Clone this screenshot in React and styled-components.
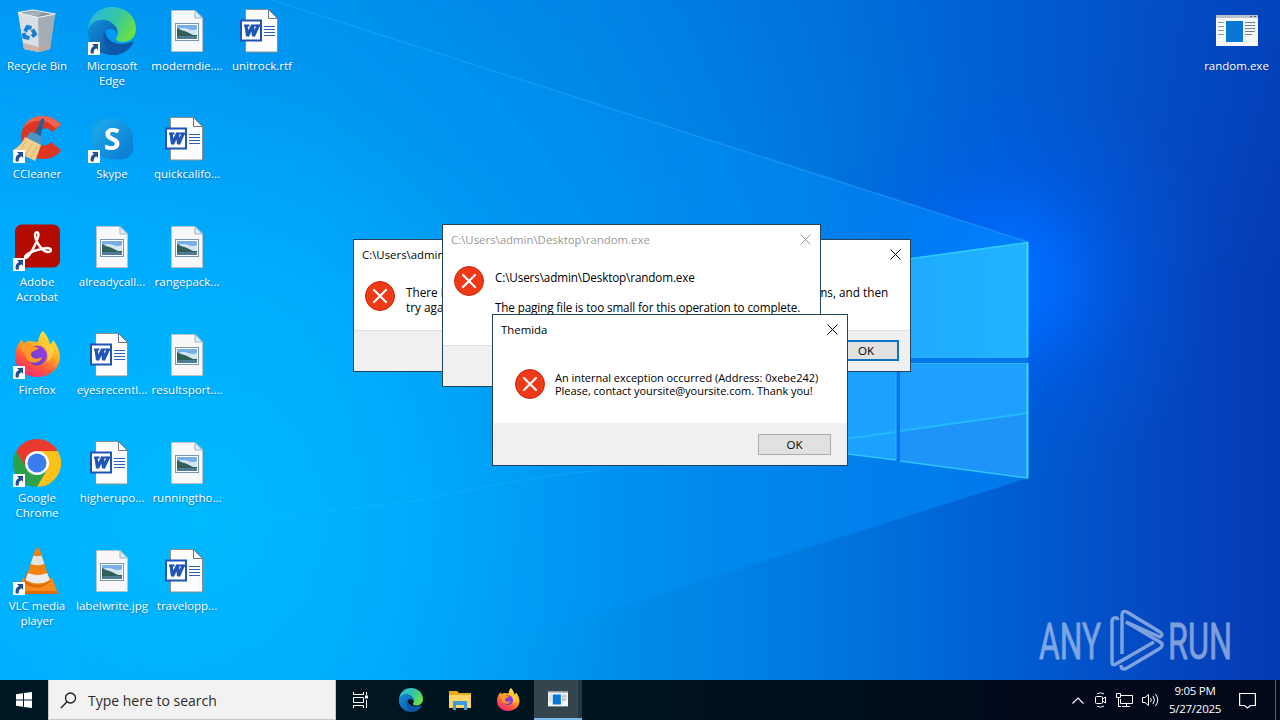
import styled, { createGlobalStyle } from 'styled-components'

const GlobalStyle = createGlobalStyle`
    * { box-sizing: border-box; }
    body {
        margin: 0;
        overflow: hidden;
        font-family: "Open Sans", "Noto Sans", sans-serif;
    }
    svg { display: block; flex: none; }
`

const desktopItems = [
    { icon: 'bin', label: 'Recycle Bin', col: 1, row: 1 },
    { icon: 'edge', label: 'Microsoft\nEdge', col: 2, row: 1, shortcut: true },
    { icon: 'image', label: 'moderndie....', col: 3, row: 1 },
    { icon: 'word', label: 'unitrock.rtf', col: 4, row: 1 },
    { icon: 'ccleaner', label: 'CCleaner', col: 1, row: 2, shortcut: true },
    { icon: 'skype', label: 'Skype', col: 2, row: 2, shortcut: true },
    { icon: 'word', label: 'quickcalifo...', col: 3, row: 2 },
    { icon: 'acrobat', label: 'Adobe\nAcrobat', col: 1, row: 3, shortcut: true },
    { icon: 'image', label: 'alreadycall...', col: 2, row: 3 },
    { icon: 'image', label: 'rangepack...', col: 3, row: 3 },
    { icon: 'firefox', label: 'Firefox', col: 1, row: 4, shortcut: true },
    { icon: 'word', label: 'eyesrecentl...', col: 2, row: 4 },
    { icon: 'image', label: 'resultsport....', col: 3, row: 4 },
    { icon: 'chrome', label: 'Google\nChrome', col: 1, row: 5, shortcut: true },
    { icon: 'word', label: 'higherupo...', col: 2, row: 5 },
    { icon: 'image', label: 'runningtho...', col: 3, row: 5 },
    { icon: 'vlc', label: 'VLC media\nplayer', col: 1, row: 6, shortcut: true },
    { icon: 'image', label: 'labelwrite.jpg', col: 2, row: 6 },
    { icon: 'word', label: 'travelopp...', col: 3, row: 6 },
    { icon: 'program', label: 'random.exe', col: 6, row: 1 },
]

function Wallpaper() {
    return (
        <WallpaperSvg viewBox="0 0 1280 720" width="1280" height="720">
            <defs>
                <linearGradient id="sky" x1="0" y1="0" x2="1280" y2="0" gradientUnits="userSpaceOnUse">
                    <stop offset="0" stopColor="#00adff" />
                    <stop offset="0.25" stopColor="#00a4f8" />
                    <stop offset="0.45" stopColor="#0092ec" />
                    <stop offset="0.62" stopColor="#007be0" />
                    <stop offset="0.78" stopColor="#005fd3" />
                    <stop offset="0.9" stopColor="#0449c2" />
                    <stop offset="1" stopColor="#043ab3" />
                </linearGradient>
                <linearGradient id="top" x1="0" y1="0" x2="0" y2="1">
                    <stop offset="0" stopColor="#005ed2" stopOpacity="0.25" />
                    <stop offset="0.4" stopColor="#0068d8" stopOpacity="0" />
                </linearGradient>
                <radialGradient id="cyan" cx="200" cy="520" r="440" gradientUnits="userSpaceOnUse">
                    <stop offset="0" stopColor="#00baff" stopOpacity="0.95" />
                    <stop offset="0.5" stopColor="#00b5ff" stopOpacity="0.6" />
                    <stop offset="1" stopColor="#00a8ff" stopOpacity="0" />
                </radialGradient>
                <radialGradient id="glow" cx="1010" cy="280" r="210" gradientUnits="userSpaceOnUse">
                    <stop offset="0" stopColor="#0074ff" />
                    <stop offset="0.25" stopColor="#006aff" stopOpacity="0.8" />
                    <stop offset="0.6" stopColor="#005cf0" stopOpacity="0.3" />
                    <stop offset="1" stopColor="#0058e6" stopOpacity="0" />
                </radialGradient>
                <linearGradient id="beam" x1="300" y1="0" x2="1028" y2="0" gradientUnits="userSpaceOnUse">
                    <stop offset="0" stopColor="#009eff" stopOpacity="0" />
                    <stop offset="0.35" stopColor="#009aff" stopOpacity="0.2" />
                    <stop offset="1" stopColor="#008cff" stopOpacity="0.6" />
                </linearGradient>
                <linearGradient id="ray" x1="270" y1="0" x2="1028" y2="0" gradientUnits="userSpaceOnUse">
                    <stop offset="0" stopColor="#2fb8ff" stopOpacity="0.3" />
                    <stop offset="1" stopColor="#2fa8ff" stopOpacity="0.45" />
                </linearGradient>
                <linearGradient id="pane" x1="0" y1="0" x2="1" y2="0">
                    <stop offset="0" stopColor="#1ba4ff" />
                    <stop offset="1" stopColor="#22b2ff" />
                </linearGradient>
            </defs>
            <rect width="1280" height="720" fill="url(#sky)" />
            <rect width="1280" height="720" fill="url(#top)" />
            <rect width="1280" height="720" fill="url(#cyan)" />
            <circle cx="1010" cy="280" r="210" fill="url(#glow)" />
            <path d="M272 0 1028 242V478L300 708V0Z" fill="url(#beam)" />
            <path d="M272 0 1028 242" stroke="url(#ray)" strokeWidth="1.5" />
            <path d="M600 470Q520 478 420 500L230 523" fill="none" stroke="#29c3ff" strokeOpacity="0.2" strokeWidth="1.5" />
            <path d="M780 276 1028 242V478L780 446Z" fill="#0078ec" />
            <path d="M780 276 1028 242V358H780Z" fill="url(#pane)" />
            <path d="M900 363H1028V478L900 461Z" fill="#1f9fff" />
            <path d="M780 363H896V460L780 446Z" fill="#1ba1ff" />
            <path d="M900 431 1028 413V478L900 461Z" fill="#1f90f5" opacity="0.7" />
            <path d="M800 445 896 432M900 431 1028 413" stroke="#22b9ff" strokeWidth="2" />
            <path d="M800 274 1028 242.5" stroke="#2accff" strokeWidth="1.5" />
            <path d="M1027.5 242V357M1027.5 363V478" stroke="#3bdcff" strokeWidth="2" />
            <path d="M900 357.5H1027M900 363.5H1027M896 372V460" stroke="#30b2ff" />
            <path d="M800 448 896 460M900 461 1028 478" stroke="#30c4ff" strokeWidth="1.5" />
        </WallpaperSvg>
    )
}

function BinIcon() {
    return (
        <svg width="48" height="48" viewBox="0 0 48 48">
            <path d="M5 5 11 42 26 45 37 42 42 7 25 9Z" fill="#c9d0d6" />
            <path d="M5 5 11 42 26 45 25 10Z" fill="#d9e0e5" />
            <path d="M25 10 42 7 37 42 26 45Z" fill="#a4adb5" />
            <path d="M10 36 26 40 38 36 37 42 26 45 11 42Z" fill="#c8a497" opacity="0.75" />
            <path d="M5 5.500 20 3 42.500 7 25 10.500Z" fill="#86939c" stroke="#eef5f9" strokeWidth="1.200" />
            <path d="M9 6 20 4.500 30 6 24 9Z" fill="#a9b3ba" />
            <g fill="none" stroke="#1580d4" strokeWidth="4">
                <path d="M12 24.500 14.500 20 18.500 21" />
                <path d="M19.500 22.500 22 27 19 29.500" />
                <path d="M16.500 31 11.500 30 10.500 26" />
            </g>
        </svg>
    )
}

function EdgeIcon({ size = 48 }) {
    return (
        <svg width={size} height={size} viewBox="0 0 48 48">
            <defs>
                <linearGradient id="edgeTop" x1="0" x2="1" y1="0.2" y2="0.6">
                    <stop offset="0" stopColor="#2bb6e4" />
                    <stop offset="0.55" stopColor="#35c7a6" />
                    <stop offset="1" stopColor="#6ee13f" />
                </linearGradient>
                <linearGradient id="edgeLow" x1="0" x2="1" y1="0" y2="1">
                    <stop offset="0" stopColor="#1191dd" />
                    <stop offset="1" stopColor="#0c4d9c" />
                </linearGradient>
            </defs>
            <path d="M0 23C1 9 11 0 24 0 38 0 48 10 48 22 48 30 42 35 35 35 30 35 27 33 28 31 31 28 30 21 25 17 16 9 4 14 0 23Z" fill="url(#edgeTop)" />
            <path d="M0 23C3 13 16 9 25 17 29 20 30 24 29 27 27 20 18 20 16 27 14 36 22 44 32 47 15 52-2 39 0 23Z" fill="url(#edgeLow)" />
            <path d="M17 24C11 34 21 47 32 47 38 45 43 41 45 36 46 34 45 34 43 35 31 40 18 35 17 24Z" fill="#0d57a6" />
        </svg>
    )
}

function ImageIcon() {
    return (
        <svg width="48" height="48" viewBox="0 0 48 48">
            <path d="M8.500 3.500H32L39.500 11V44.500H8.500Z" fill="#f8f8f8" stroke="#b6c3cb" />
            <path d="M32 3.500V11H39.500Z" fill="#d7eefb" stroke="#9db5c2" />
            <rect x="12.500" y="16.500" width="23" height="17" fill="#fff" stroke="#7b97aa" />
            <rect x="14" y="18" width="20" height="14" fill="#78aee8" />
            <path d="M14 22.500Q20 20 25 22T34 22V28H14Z" fill="#d3e6f2" />
            <path d="M14 21Q19 24 23 24.500L30 28H34V29.500H14Z" fill="#2f5f56" />
            <path d="M14 29H34V32H14Z" fill="#4d7c93" />
        </svg>
    )
}

function WordIcon() {
    return (
        <svg width="48" height="48" viewBox="0 0 48 48">
            <path d="M7.500 2.500H30.500L39.500 11.500V45H7.500Z" fill="#fdfdfd" stroke="#8a8f94" />
            <path d="M30.500 2.500V11.500H39.500Z" fill="#fff" stroke="#6f767c" />
            <path d="M26 19.500H37M26 22.500H37M26 25.500H37M26 28.500H37" stroke="#2e62b9" />
            <rect x="3" y="13.500" width="20" height="20" fill="#fff" stroke="#1e55b3" strokeWidth="2" />
            <path d="M6 18.500H11.500M13 18.500H22" stroke="#1f55b4" strokeWidth="2" />
            <path d="M8 18 9.500 29 14.500 18.500 15.500 29 20.500 18" fill="none" stroke="#1f55b4" strokeWidth="3.200" strokeLinejoin="bevel" />
        </svg>
    )
}

function CCleanerIcon() {
    return (
        <svg width="48" height="48" viewBox="0 0 48 48">
            <path d="M48 10C38-3 14-2 9 16 5 30 15 44 30 44 38 44 44 41 48 35L38 27C34 32 28 31 26 27 23 21 25 16 29 14 34 12 37 14 39 17Z" fill="#de3625" />
            <path d="M48 10C38-3 16-2 10 13 19 4 33 3 42 13Z" fill="#f0664c" />
            <path d="M28 4.500Q30 2 31.500 5L27 23 21 20Z" fill="#2d5e91" />
            <path d="M17 17Q24 17 30 24L28 31 13 24Z" fill="#4a94c8" />
            <path d="M12 22 28 30Q25 39 22 46L0 35Q8 31 12 22Z" fill="#f3cf90" />
            <path d="M13 26 6 37M19 29 12 41M24 31 18 43" stroke="#d8a865" strokeWidth="0.800" />
        </svg>
    )
}

function SkypeIcon() {
    return (
        <svg width="48" height="48" viewBox="0 0 48 48">
            <defs>
                <linearGradient id="skypeFill" x1="0" x2="1" y1="0" y2="1">
                    <stop offset="0" stopColor="#1eaeec" />
                    <stop offset="1" stopColor="#0a78d0" />
                </linearGradient>
            </defs>
            <circle cx="16" cy="17" r="13" fill="#12a0e6" />
            <circle cx="33" cy="32" r="12.500" fill="#0a80d6" />
            <circle cx="24.500" cy="24" r="20.500" fill="url(#skypeFill)" />
            <text x="24" y="34.500" textAnchor="middle" fill="#fff" fontFamily="Open Sans, sans-serif" fontSize="30" fontWeight="700">S</text>
        </svg>
    )
}

function AcrobatIcon() {
    return (
        <svg width="48" height="48" viewBox="0 0 48 48">
            <rect x="2" y="1.500" width="45" height="43" rx="7" fill="#b30b00" />
            <path d="M12 34C13 30 25 26 34 25 39 25 39 29 35 29 28 29 22 16 22 12 22 8 27 8 25 14 23 22 16 34 13 35Q12 35 12 34Z" fill="none" stroke="#fff" strokeWidth="2.400" strokeLinejoin="round" />
        </svg>
    )
}

function FirefoxIcon({ size = 48 }) {
    return (
        <svg width={size} height={size} viewBox="0 0 48 48">
            <defs>
                <linearGradient id="foxBody" x1="0.8" x2="0.25" y1="0" y2="1">
                    <stop offset="0" stopColor="#fff14a" />
                    <stop offset="0.4" stopColor="#ffaf20" />
                    <stop offset="0.7" stopColor="#ff573d" />
                    <stop offset="1" stopColor="#ef2679" />
                </linearGradient>
                <linearGradient id="foxGlobe" x1="0" x2="1" y1="1" y2="0">
                    <stop offset="0" stopColor="#5c45c8" />
                    <stop offset="1" stopColor="#a13be2" />
                </linearGradient>
            </defs>
            <path d="M30 0C34 4 36 9 37 13 39 12 40 10 40 9 45 15 47 21 47 27 46 39 36 46 24 46 11 46 2 37 2 25 2 18 5 13 9 8 9 10 10 12 12 12 16 8 20 11 25 11 26 5 27 3 30 0Z" fill="url(#foxBody)" />
            <circle cx="24" cy="24.500" r="10" fill="url(#foxGlobe)" />
            <path d="M6 14C11 10 16 11 19 15L26 17C23 20 18 20 18 23 18 28 24 29 29 26 27 34 13 34 12 23 10 20 7 18 6 14Z" fill="#ff9b25" />
            <path d="M25 12C33 13 37 22 34 31 39 28 42 22 40 16Z" fill="#ffd34a" opacity="0.8" />
        </svg>
    )
}

function ChromeIcon() {
    return (
        <svg width="48" height="48" viewBox="0 0 48 48">
            <path d="M3.200 12A24 24 0 0 1 44.800 12H24Z" fill="#ea3a30" />
            <path d="M3.200 12A24 24 0 0 0 24 48L34.400 30 24 24Z" fill="#2ca14a" />
            <path d="M44.800 12A24 24 0 0 1 24 48L34.400 30 24 12Z" fill="#fbc116" />
            <path d="M3.200 12H24V20L13 28Z" fill="#ea3a30" />
            <circle cx="24" cy="24" r="12" fill="#fff" />
            <circle cx="24" cy="24" r="9.500" fill="#3b7ded" />
        </svg>
    )
}

function VlcIcon() {
    return (
        <svg width="48" height="48" viewBox="0 0 48 48">
            <path d="M10 31H39L45 46H5Z" fill="#f68b1c" />
            <path d="M5 44H44.500L45 47H5Z" fill="#e06c05" />
            <path d="M11 32 14 26H34L38 34Q25 46 11 36Z" fill="#df6a05" />
            <path d="M22.500 2Q24.500 0 26.500 2L37 34Q25 42 12 34Z" fill="#f5810d" />
            <path d="M20.500 8.500Q25 10 28.500 8.500L31.500 17Q25 19.500 17.500 17Z" fill="#e4e4e2" />
            <path d="M15 26Q25 30 34 26L37 33Q25 40 12.500 33Z" fill="#ececea" />
        </svg>
    )
}

function ProgramIcon({ small }) {
    return (
        <svg width={small ? 20 : 42} height={small ? 16 : 48} viewBox={small ? '0 8 42 31' : '0 0 42 48'}>
            <rect y="8" width="42" height="31" fill="#f4f6f8" />
            <path d="M0 8H42V11H0Z" fill="#b8c1c9" />
            <path d="M34 9.500H36M38 9.500H40" stroke="#59636b" />
            <rect x="10" y="14" width="17" height="21" fill="#0878d4" />
            <path d="M2 15.500H8M2 19.500H8M2 23.500H8M2 27.500H8" stroke="#939ba2" />
            <path d="M29 15.500H39M29 18.500H39M29 21.500H39M29 24.500H39M29 27.500H36" stroke="#788089" />
        </svg>
    )
}

const icons = {
    bin: BinIcon,
    edge: EdgeIcon,
    image: ImageIcon,
    word: WordIcon,
    ccleaner: CCleanerIcon,
    skype: SkypeIcon,
    acrobat: AcrobatIcon,
    firefox: FirefoxIcon,
    chrome: ChromeIcon,
    vlc: VlcIcon,
    program: ProgramIcon,
}

function DesktopIcon({ item }) {
    const Icon = icons[item.icon]
    return (
        <DesktopCell $col={item.col} $row={item.row}>
            <IconBox>
                <Icon />
                {item.shortcut &&
                <ShortcutBadge>
                    <svg width="12" height="13" viewBox="0 0 12 13">
                        <path d="M4 2H10V8L8.300 6.300C6 7.500 5.500 9 5.800 11.500L3 11.500C1.800 8.200 3.300 5.400 6 4Z" fill="#214f8f" />
                    </svg>
                </ShortcutBadge>}
            </IconBox>
            <Label>{item.label}</Label>
        </DesktopCell>
    )
}

function ErrorIcon() {
    return (
        <svg width="30" height="30" viewBox="0 0 30 30">
            <circle cx="15" cy="15" r="14.500" fill="#f03a17" stroke="#c62b12" />
            <path d="M9 9 21 21M21 9 9 21" stroke="#fff" strokeWidth="2.200" strokeLinecap="round" />
        </svg>
    )
}

function CloseIcon() {
    return (
        <svg width="11" height="11" viewBox="0 0 11 11">
            <path d="M0.500 0.500 10.500 10.500M10.500 0.500 0.500 10.500" stroke="currentColor" />
        </svg>
    )
}

function Dialog({ title, inactive, area, footer, line, children, ok }) {
    return (
        <Window $area={area}>
            <TitleBar $inactive={inactive}>
                <span>{title}</span>
                <CloseIcon />
            </TitleBar>
            {children}
            <DialogFooter $height={footer} $line={line}>
                {ok && <OkButton $focused={ok.focused} $top={ok.top} $right={ok.right}>OK</OkButton>}
            </DialogFooter>
        </Window>
    )
}

function Watermark() {
    return (
        <WatermarkSvg width="204" height="66" viewBox="0 0 204 66">
            <g fill="#d0dcf0" stroke="#d0dcf0" strokeWidth="0.8" fontFamily="Roboto, sans-serif" fontSize="50">
                <text x="2" y="51" textLength="62" lengthAdjust="spacingAndGlyphs">ANY</text>
                <text x="131" y="51" textLength="64" lengthAdjust="spacingAndGlyphs">RUN</text>
            </g>
            <g fill="none" stroke="#d0dcf0" strokeWidth="3.4" strokeLinejoin="round">
                <path d="M81 12Q80 9 77 10 75 11 75 14V54Q75 58 79 56L117 34" />
                <path d="M85 46V7Q85 2 90 4L123 24Q127 27 123 29L89 14" />
                <path d="M84 57Q84 63 90 60L122 41Q128 37 123 34L89 14" />
            </g>
        </WatermarkSvg>
    )
}

function Taskbar() {
    return (
        <Bar>
            <BarButton $width={48}>
                <svg width="16" height="16" viewBox="0 0 16 16" fill="#fff">
                    <path d="M0 2.200 7 1.200V7.500H0ZM8 1 16 0V7.500H8ZM0 8.500H7V14.800L0 13.800ZM8 8.500H16V16L8 15Z" />
                </svg>
            </BarButton>
            <SearchBox>
                <svg width="17" height="17" viewBox="0 0 17 17" fill="none" stroke="#1b1b1b" strokeWidth="1.3">
                    <circle cx="10.500" cy="6" r="5" />
                    <path d="M7 9.700 1 16" />
                </svg>
                <span>Type here to search</span>
            </SearchBox>
            <BarButton $width={48}>
                <svg width="17" height="16" viewBox="0 0 17 16" fill="none" stroke="#fff">
                    <path d="M1.500 0V2.500H11.500V0M1.500 16V13.500H11.500V16M1.500 5.500H11.500V10.500H1.500ZM14.500 0V3M14.500 8V16" />
                    <path d="M13 5H16" strokeWidth="3" />
                </svg>
            </BarButton>
            <BarButton $width={53}><EdgeIcon size={24} /></BarButton>
            <BarButton $width={45}>
                <svg width="22" height="20" viewBox="0 0 22 20">
                    <path d="M0 1H8L10 3H22V18H0Z" fill="#e8a91c" />
                    <path d="M0 5H22V18H0Z" fill="#ffd568" />
                    <path d="M4 11H18V20H15V15H7V20H4Z" fill="#3d9be0" />
                </svg>
            </BarButton>
            <BarButton $width={52}><FirefoxIcon size={24} /></BarButton>
            <BarButton $width={48} $active><ProgramIcon small /></BarButton>
            <Tray>
                <svg width="12" height="7" viewBox="0 0 12 7" fill="none" stroke="#fff" strokeWidth="1.2"><path d="M0.500 6.500 6 1 11.500 6.500" /></svg>
                <svg width="14" height="16" viewBox="-2 0 14 16" fill="none" stroke="#fff">
                    <path d="M2 2Q5.500-0.500 9 2M2 14Q5.500 16.500 9 14" />
                    <rect x="0.500" y="4.500" width="7" height="7" rx="1" />
                    <path d="M7.500 7 10.500 5V11L7.500 9" />
                </svg>
                <svg width="17" height="16" viewBox="0 0 17 16" fill="none" stroke="#fff">
                    <path d="M5 3.500H16.500V11.500H4.500V7M10.500 12V14.500M6 14.500H14M0.500 1.500H4.500V5.500H0.500ZM2.500 6V14.500H5" />
                </svg>
                <svg width="17" height="14" viewBox="0 0 17 14" fill="none" stroke="#fff">
                    <path d="M0.500 4.500H3L6.500 1.500V12.500L3 9.500H0.500ZM8.500 5Q10 7 8.500 9M11 3Q14 7 11 11M13.500 1Q18 7 13.500 13" />
                </svg>
                <Clock>
                    <span>9:05 PM</span>
                    <span>5/27/2025</span>
                </Clock>
                <svg width="17" height="17" viewBox="0 0 17 17" fill="none" stroke="#fff" strokeWidth="1.2">
                    <path d="M0.600 1.500H16.400V13.500H11.500L8.500 16 5.500 13.500H0.600Z" />
                </svg>
            </Tray>
            <ShowDesktop />
        </Bar>
    )
}

export default function App() {
    return (
        <Screen>
            <GlobalStyle />
            <Wallpaper />
            <Desktop>
                {desktopItems.map((item) => (
                    <DesktopIcon key={item.label} item={item} />
                ))}
            </Desktop>
            <Watermark />

            <Dialog title="C:\Users\admin\Desktop\random.exe" area={[353, 239, 558, 133]} footer={41} line ok={{ focused: true, top: 9, right: 11 }}>
                <Message $top={11}>
                    <ErrorIcon />
                    <MessageText $gap={11} $top={4} $size={11.75} $spacing={0.01}>
                        There is not enough memory to run this program. Quit one or more programs, and then{'\n'}try again.
                    </MessageText>
                </Message>
            </Dialog>

            <Dialog title="C:\Users\admin\Desktop\random.exe" inactive area={[442, 224, 379, 163]} footer={41} line>
                <Message $top={11}>
                    <ErrorIcon />
                    <MessageText $gap={11} $top={4} $size={11.7} $spacing={-0.13}>{'C:\\Users\\admin\\Desktop\\random.exe\n\nThe paging file is too small for this operation to complete.'}</MessageText>
                </Message>
            </Dialog>

            <Dialog title="Themida" area={[492, 314, 356, 152]} footer={42} ok={{ top: 11, right: 16 }}>
                <Message $top={24} $left={22}>
                    <ErrorIcon />
                    <MessageText $gap={10} $top={2} $size={11} $line={13} $spacing={-0.03}>{'An internal exception occurred (Address: 0xebe242)\nPlease, contact yoursite@yoursite.com. Thank you!'}</MessageText>
                </Message>
            </Dialog>

            <Taskbar />
        </Screen>
    )
}

const Screen = styled.main`
    position: relative;
    width: 1280px;
    height: 720px;
    overflow: hidden;
    display: flex;
    flex-direction: column;
    background: #0090f0;
`

const WallpaperSvg = styled.svg`
    position: absolute;
    inset: 0;
`

const Desktop = styled.div`
    position: relative;
    flex: 1;
    display: grid;
    grid-template-columns: 74px 76px 74px 76px 1fr 87px;
    grid-template-rows: repeat(6, 108px);
    padding-top: 7px;
`

const DesktopCell = styled.div`
    grid-column: ${(props) => props.$col};
    grid-row: ${(props) => props.$row};
    display: flex;
    flex-direction: column;
    align-items: center;
`

const IconBox = styled.div`
    position: relative;
    height: 48px;
`

const ShortcutBadge = styled.div`
    position: absolute;
    left: 0;
    top: 35px;
    background: #fff;
`

const Label = styled.span`
    margin-top: 3px;
    color: #fff;
    font-size: 11.5px;
    line-height: 15px;
    text-align: center;
    white-space: pre;
    text-shadow: 0 1px 2px rgba(0, 40, 90, 0.45);
`

const WatermarkSvg = styled.svg`
    position: absolute;
    left: 1037px;
    top: 608px;
    opacity: 0.6;
`

const Window = styled.section`
    position: absolute;
    left: ${(props) => props.$area[0]}px;
    top: ${(props) => props.$area[1]}px;
    width: ${(props) => props.$area[2]}px;
    height: ${(props) => props.$area[3]}px;
    display: flex;
    flex-direction: column;
    background: #fff;
    border: 1px solid #24435c;
`

const TitleBar = styled.header`
    height: 30px;
    flex: none;
    display: flex;
    align-items: center;
    justify-content: space-between;
    padding: 0 9px 2px 8px;
    font-size: 11.4px;
    color: ${(props) => (props.$inactive ? '#999' : '#000')};
`

const Message = styled.div`
    flex: 1;
    min-height: 0;
    display: flex;
    align-items: flex-start;
    padding: ${(props) => props.$top}px 0 0 ${(props) => props.$left || 11}px;
`

const MessageText = styled.p`
    margin: ${(props) => props.$top}px 0 0 ${(props) => props.$gap}px;
    font-size: ${(props) => props.$size}px;
    line-height: ${(props) => props.$line || 15}px;
    letter-spacing: ${(props) => props.$spacing || 0}px;
    white-space: pre;
    color: #000;
`

const DialogFooter = styled.footer`
    flex: none;
    height: ${(props) => props.$height}px;
    display: flex;
    align-items: flex-start;
    justify-content: flex-end;
    background: #f0f0f0;
    border-top: ${(props) => (props.$line ? '1px solid #dfdfdf' : 'none')};
`

const OkButton = styled.button`
    width: ${(props) => (props.$focused ? 66 : 73)}px;
    height: 21px;
    margin: ${(props) => props.$top}px ${(props) => props.$right}px 0 0;
    padding: 0;
    font: 11.5px "Open Sans", sans-serif;
    line-height: 15px;
    background: #e1e1e1;
    border: ${(props) => (props.$focused ? '2px solid #0b74c9' : '1px solid #adadad')};
`

const Bar = styled.nav`
    position: relative;
    height: 40px;
    flex: none;
    display: flex;
    background: linear-gradient(90deg, #001823, #00141f 50%, #020a1c 80%, #020818);
`

const BarButton = styled.div`
    width: ${(props) => props.$width}px;
    display: flex;
    align-items: center;
    justify-content: center;
    background: ${(props) => (props.$active ? 'linear-gradient(90deg, #35454e 44px, #24353f 44px)' : 'none')};
    border-bottom: ${(props) => (props.$active ? '2px solid #76b9ed' : 'none')};
`

const SearchBox = styled.div`
    width: 288px;
    display: flex;
    align-items: center;
    gap: 11px;
    padding-left: 11px;
    background: #f2f2f2;
    border: 1px solid #c4c8ca;
    border-top-color: #f2f2f2;
    font-size: 14px;
    color: #2b2b2b;
`

const Tray = styled.div`
    margin-left: auto;
    display: flex;
    align-items: center;
    gap: 9px;
    padding-right: 19px;
`

const Clock = styled.div`
    width: 50px;
    margin: 0 10px 0 2px;
    display: flex;
    flex-direction: column;
    align-items: center;
    font-size: 11.5px;
    line-height: 18px;
    letter-spacing: -0.25px;
    color: #fff;
    white-space: nowrap;
`

const ShowDesktop = styled.div`
    width: 5px;
    border-left: 1px solid #59606e;
`
